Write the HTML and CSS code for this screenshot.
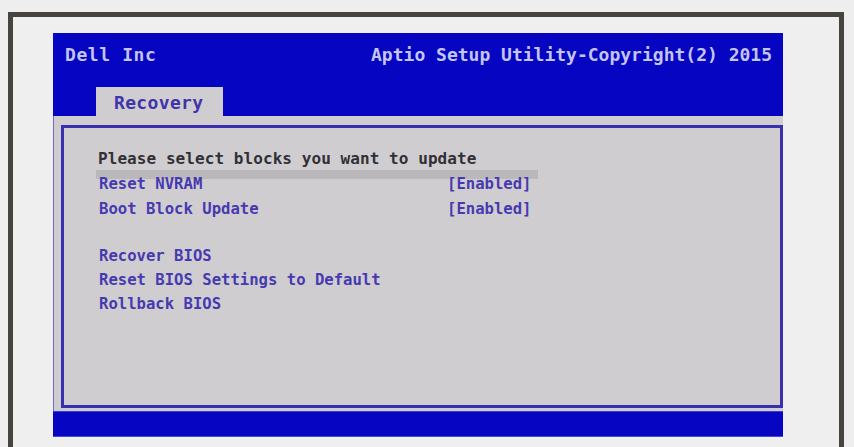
FILE: index.html
```html
<!DOCTYPE html>
<html>
<head>
<meta charset="utf-8">
<link rel="stylesheet" href="styles.css">
</head>
<body>
<div class="frame">
  <div class="screen">
    <div class="header">
      <span class="brand">Dell Inc</span>
      <span class="title">Aptio Setup Utility-Copyright(2) 2015</span>
    </div>
    <div class="tabs">
      <div class="tab">Recovery</div>
    </div>
    <div class="panel">
      <div class="box">
        <div class="prompt">Please select blocks you want to update</div>
        <div class="row selected"><span class="label">Reset NVRAM</span><span class="value">[Enabled]</span></div>
        <div class="row second"><span class="label">Boot Block Update</span><span class="value">[Enabled]</span></div>
        <div class="row group"><span class="label">Recover BIOS</span></div>
        <div class="row"><span class="label">Reset BIOS Settings to Default</span></div>
        <div class="row"><span class="label">Rollback BIOS</span></div>
      </div>
    </div>
    <div class="footer"></div>
  </div>
</div>
</body>
</html>
```

FILE: styles.css
```css
html, body {
  margin: 0;
  padding: 0;
  background: #eeeeee;
  overflow: hidden;
}
body {
  width: 854px;
  height: 447px;
  font-family: "DejaVu Sans Mono", "Liberation Mono", monospace;
  font-weight: bold;
}
.frame {
  box-sizing: border-box;
  margin: 12px 0 0 8px;
  width: 836px;
  height: 435px;
  border: 5px solid #47433f;
  border-bottom: none;
  background: #efefef;
  padding: 16px 0 0 40px;
}
.screen {
  width: 730px;
  height: 404px;
  background: #0505c2;
  display: flex;
  flex-direction: column;
}
.header {
  height: 54px;
  box-sizing: border-box;
  padding: 12px 11px 0 12px;
  display: flex;
  justify-content: space-between;
  font-size: 18px;
  line-height: 20px;
  color: #c4c4f2;
}
.brand {
  letter-spacing: 0.6px;
}
.tabs {
  height: 29px;
  padding-left: 43px;
  display: flex;
}
.tab {
  width: 127px;
  box-sizing: border-box;
  background: #d0cdd0;
  color: #4034aa;
  font-size: 18px;
  line-height: 20px;
  padding: 6px 0 0 18px;
  letter-spacing: 0.35px;
}
.panel {
  height: 295px;
  background: #d0cdd0;
  box-sizing: border-box;
  padding: 9px 0 3px 7px;
  border-left: 1px solid #6f6cc8;
}
.box {
  height: 283px;
  box-sizing: border-box;
  border: 3px solid #3a30ae;
  padding: 19px 0 0 32px;
  font-size: 16px;
}
.prompt {
  line-height: 23px;
  padding-left: 2px;
  color: #303036;
  letter-spacing: 0.07px;
}
.row {
  box-sizing: border-box;
  width: 442px;
  display: flex;
  padding-left: 3px;
  line-height: 24px;
  font-size: 15.6px;
  color: #463ab0;
}
.row.selected {
  padding-top: 2px;
  background: linear-gradient(#bab8ba 0 9px, transparent 9px);
}
.row.second {
  margin-top: 1px;
}
.row.group {
  margin-top: 23px;
}
.label {
  width: 348px;
}
.footer {
  height: 26px;
  box-sizing: border-box;
  background: #0505c2;
  border-top: 1px solid #3a3ad6;
  border-bottom: 1px solid #4848d8;
}
```
